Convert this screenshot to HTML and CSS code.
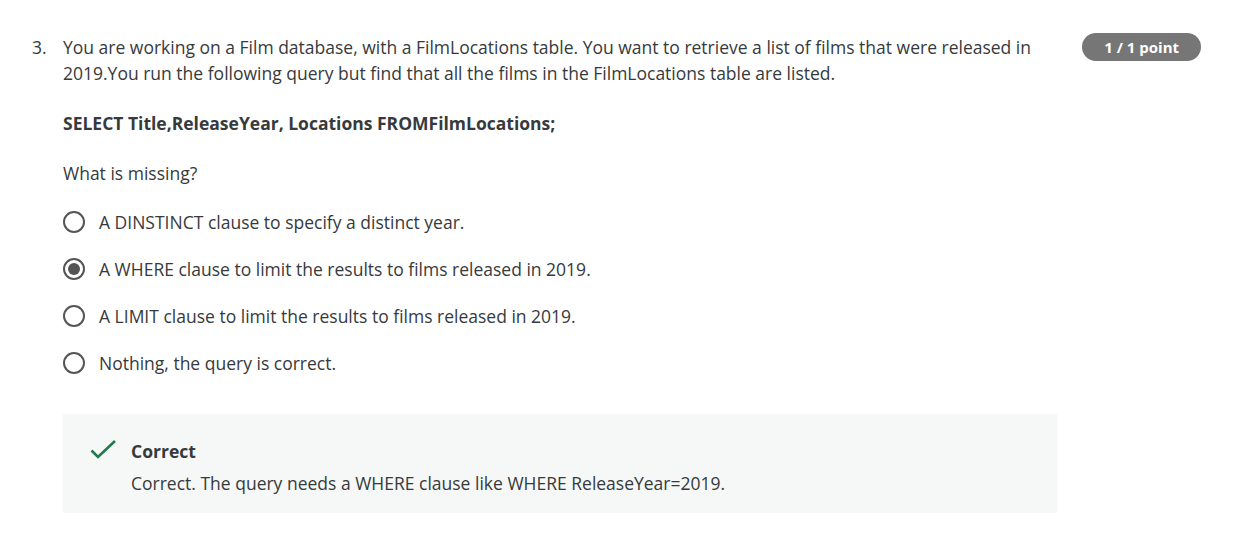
FILE: index.html
```html
<!DOCTYPE html>
<html>
<head>
<meta charset="utf-8">
<link rel="stylesheet" href="styles.css">
</head>
<body>
<div class="question">
  <div class="qnum">3.</div>
  <div class="qbody">
    <p class="prompt">You are working on a Film database, with a FilmLocations table. You want to retrieve a list of films that were released in 2019.You run the following query but find that all the films in the FilmLocations table are listed.</p>
    <p class="code">SELECT Title,ReleaseYear, Locations FROMFilmLocations;</p>
    <p class="ask">What is missing?</p>
    <div class="options">
      <div class="option"><span class="radio"></span><span>A DINSTINCT clause to specify a distinct year.</span></div>
      <div class="option"><span class="radio checked"></span><span>A WHERE clause to limit the results to films released in 2019.</span></div>
      <div class="option"><span class="radio"></span><span>A LIMIT clause to limit the results to films released in 2019.</span></div>
      <div class="option"><span class="radio"></span><span>Nothing, the query is correct.</span></div>
    </div>
    <div class="feedback">
      <svg class="check" width="26" height="20" viewBox="0 0 26 20"><path d="M1.5 10.5 L8 17 L25 1" fill="none" stroke="#1f7a4d" stroke-width="2.6"/></svg>
      <div class="fb-text">
        <div class="fb-title">Correct</div>
        <div class="fb-msg">Correct. The query needs a WHERE clause like WHERE ReleaseYear=2019.</div>
      </div>
    </div>
  </div>
  <div class="badge">1 / 1 point</div>
</div>
</body>
</html>
```
FILE: styles.css
```css
html, body { margin: 0; padding: 0; background: #fff; }
body {
  font-family: "Open Sans", "Liberation Sans", sans-serif;
  color: #373a3c;
  font-size: 17.5px;
}
.question {
  display: flex;
  padding: 34px 55px 0 32px;
}
.qnum { width: 31px; flex: none; line-height: 26px; }
.qbody { width: 994px; flex: none; }
.prompt { margin: 0; line-height: 26px; }
.code { margin: 24px 0 0; font-weight: 700; line-height: 26px; }
.ask { margin: 24px 0 0; line-height: 26px; }
.options { margin-top: 23px; display: flex; flex-direction: column; gap: 21px; }
.option { display: flex; align-items: center; height: 26px; gap: 14px; }
.radio {
  width: 18px; height: 18px; border: 2px solid #555;
  border-radius: 50%; flex: none; box-sizing: content-box;
  position: relative;
}
.radio.checked::after {
  content: ""; position: absolute; left: 3px; top: 3px; width: 12px; height: 12px;
  border-radius: 50%; background: #555;
}
.feedback {
  margin-top: 38px;
  background: #f5f8f7;
  display: flex;
  padding: 25px 0 18px 27px;
  gap: 15px;
}
.check { margin-top: 1px; flex: none; }
.fb-title { font-weight: 700; line-height: 24px; }
.fb-msg { margin-top: 8px; line-height: 24px; }
.badge {
  margin-left: auto;
  margin-top: -1px;
  background: #767676;
  color: #fff;
  font-weight: 700;
  font-size: 15px;
  height: 28px;
  line-height: 28px;
  padding: 0 22px;
  border-radius: 14px;
  white-space: nowrap;
}
```
